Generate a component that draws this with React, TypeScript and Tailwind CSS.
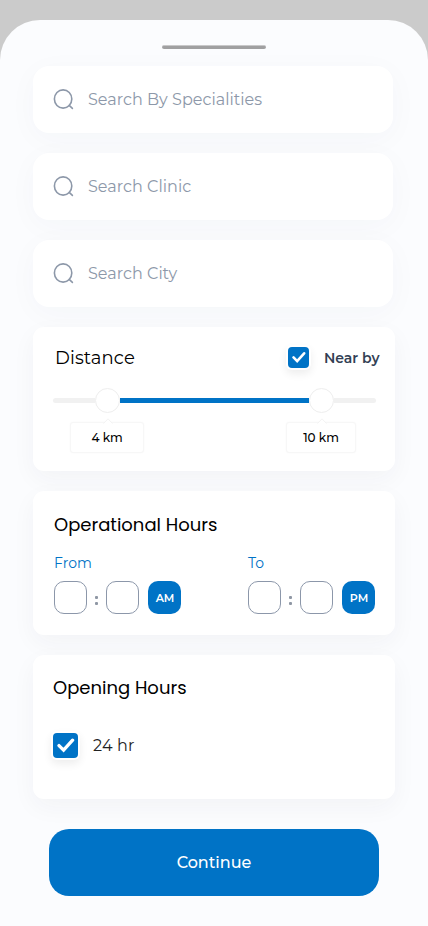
import React from "react";

function SearchIcon() {
  return (
    <svg width="22" height="22" viewBox="0 0 22 22" fill="none" stroke="#8d98a9" strokeWidth="1.6" strokeLinecap="round">
      <ellipse cx="10.1" cy="10" rx="8.7" ry="9.1" />
      <path d="M16.2 16.4L19.4 19.4" />
    </svg>
  );
}

function SearchField({ label }: { label: string }) {
  return (
    <div className="flex h-[67px] w-[360px] items-center rounded-[16px] bg-white pl-5 shadow-[0_6px_30px_rgba(40,60,90,0.03)]">
      <SearchIcon />
      <span className="ml-[13px] whitespace-nowrap text-base leading-6 tracking-[0.03px] text-[#8d98a9]">{label}</span>
    </div>
  );
}

function Card({ children }: { children: React.ReactNode }) {
  return (
    <section className="flex h-36 w-[362px] flex-col rounded-[11px] bg-white shadow-[0_8px_24px_rgba(40,50,70,0.045)]">
      {children}
    </section>
  );
}

function CheckBox({ large = false }: { large?: boolean }) {
  return (
    <span
      className={`flex shrink-0 items-center justify-center rounded-[4px] bg-[#0073c6] pb-px shadow-[0_0_0_2px_#fff,0_4px_8px_2px_rgba(0,0,0,0.07)] ${
        large ? "size-[25px]" : "size-[21px]"
      }`}
    >
      <svg width={large ? 18 : 14} height={large ? 18 : 14} viewBox="0 0 18 18" fill="none" stroke="#fff" strokeWidth="3.3">
        <path d="M2 9.6L6.6 14.2L15.6 4.2" strokeLinecap="round" />
      </svg>
    </span>
  );
}

function Thumb() {
  return <span className="size-[25px] shrink-0 rounded-full border border-[#eeeeee] bg-white" />;
}

function Bubble({ label, size, point }: { label: string; size: string; point: string }) {
  return (
    <div className={`relative flex h-[31px] items-center justify-center rounded-[3px] border border-[#f7f7f7] bg-white pl-px text-xs font-medium leading-4 text-black shadow-[0_0_2px_rgba(0,0,0,0.03)] ${size}`}>
      <svg className={`absolute -top-[5px] ${point}`} width="10" height="6" viewBox="0 0 10 6" fill="#fff" stroke="#f3f3f3">
        <path d="M0.5 5.5L5 0.8L9.5 5.5" />
      </svg>
      {label}
    </div>
  );
}

function TimePicker({ label, period }: { label: string; period: string }) {
  return (
    <div className="w-[127px]">
      <div className="h-5 text-sm leading-5 text-[#0073c6]">{label}</div>
      <div className="mt-2 flex items-center">
        <span className="size-[33px] rounded-[10px] border border-[#8c97aa]" />
        <span className="ml-[8px] mt-[5px] flex w-[3px] flex-col gap-[3px]">
          <i className="size-[3px] rounded-[1px] bg-[#8f97a4]" />
          <i className="size-[3px] rounded-[1px] bg-[#8f97a4]" />
        </span>
        <span className="ml-[8px] size-[33px] rounded-[10px] border border-[#8c97aa]" />
        <span className="ml-[9px] flex size-[33px] items-center justify-center rounded-[10px] bg-[#0073c6] pl-px text-[11px] font-semibold leading-4 text-white">
          {period}
        </span>
      </div>
    </div>
  );
}

export default function App() {
  return (
    <main className="h-[926px] w-[428px] overflow-hidden bg-[#cbcbcb] pt-5 font-['Montserrat','Inter',sans-serif]">
      <div className="flex h-[906px] flex-col rounded-t-[40px] bg-[#fbfcfe] pl-[33px]">
        <div className="ml-[129px] mt-[25px] h-[4px] w-[104px] rounded-full border-t border-[#c8c8c9] bg-[#a0a0a1]" />
        <div className="mt-[17px] flex flex-col gap-5">
          <SearchField label="Search By Specialities" />
          <SearchField label="Search Clinic" />
          <SearchField label="Search City" />

          <Card>
            <div className="mt-5 flex h-[21px] items-center pl-[22px]">
              <h2 className="w-[233px] text-[18px] font-normal leading-6 tracking-[0.1px] text-black">Distance</h2>
              <CheckBox />
              <span className="ml-[15px] whitespace-nowrap text-sm font-semibold leading-5 text-[#333f54]">Near by</span>
            </div>
            <div className="mt-5 flex h-[25px] items-center pl-[19.5px]">
              <span className="h-[5px] w-[42px] rounded-l-full bg-[#f1f1f1]" />
              <Thumb />
              <span className="h-[5px] w-[189px] bg-[#0073c6]" />
              <Thumb />
              <span className="h-[5px] w-[42px] rounded-r-full bg-[#f1f1f1]" />
            </div>
            <div className="mt-[9px] flex pl-[36.5px]">
              <Bubble label="4 km" size="w-[74px]" point="left-[32px]" />
              <div className="ml-[142px]">
                <Bubble label="10 km" size="w-[70px]" point="left-[30px]" />
              </div>
            </div>
          </Card>

          <Card>
            <h2 className="ml-[21px] mt-[22px] font-['Poppins','Montserrat',sans-serif] text-[18px] leading-6 text-black">
              Operational Hours
            </h2>
            <div className="ml-[21px] mt-4 flex gap-[67px]">
              <TimePicker label="From" period="AM" />
              <TimePicker label="To" period="PM" />
            </div>
          </Card>

          <Card>
            <h2 className="ml-5 mt-[21px] font-['Poppins','Montserrat',sans-serif] text-[18px] leading-6 text-black">
              Opening Hours
            </h2>
            <div className="ml-5 mt-[33px] flex h-[25px] items-center">
              <CheckBox large />
              <span className="ml-[15px] text-base leading-6 tracking-[0.15px] text-[#222222]">24 hr</span>
            </div>
          </Card>
        </div>
        <button className="ml-4 mt-[30px] h-[67px] w-[330px] shrink-0 rounded-[20px] bg-[#0073c6] text-base font-medium leading-6 text-white">
          Continue
        </button>
      </div>
    </main>
  );
}
